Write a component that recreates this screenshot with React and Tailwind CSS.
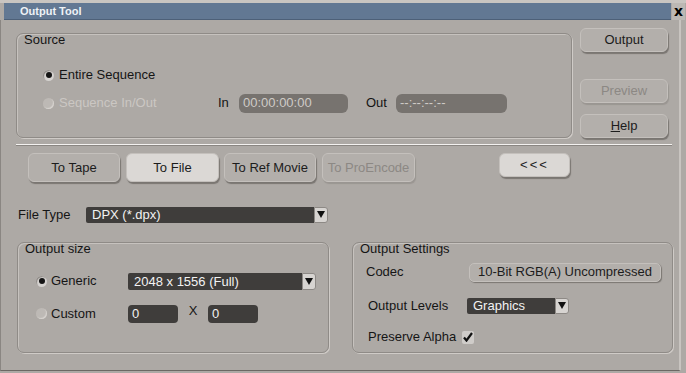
import React from 'react';

const font = { fontFamily: '"Liberation Sans", Arial, sans-serif' };

// Raised bevelled button used all over the dialog
const Btn = ({ children, className = '', disabled, active }) => (
    <div
        className={`flex items-center justify-center rounded-[6px] text-[13px] border border-[#c4c0bc] shadow-[1px_2px_1px_#7a7672] ${
            active ? 'bg-[#dbd8d5]' : 'bg-[#b3afab]'
        } ${disabled ? 'text-[#8c8884] shadow-[1px_2px_1px_#9a9692]' : 'text-[#1c1c1c]'} ${className}`}
    >
        {children}
    </div>
);

const Radio = ({ checked, disabled }) => (
    <div
        className={`w-[11px] h-[11px] rounded-full flex items-center justify-center ${
            disabled ? 'bg-[#bdb9b5] shadow-[inset_-1px_-1px_1px_#d8d4d0]' : 'bg-[#d6d3d0] shadow-[inset_1px_1px_1px_#8c8884]'
        }`}
    >
        {checked && <div className="w-[6px] h-[6px] rounded-full bg-[#151515]" />}
    </div>
);

const Dropdown = ({ value, className = '', text = 'text-[13px]' }) => (
    <div className={`flex items-stretch ${className}`}>
        <div className={`flex-1 bg-[#3f3d3b] text-[#f2f2f2] ${text} leading-none flex items-center pl-[6px] rounded-l-[2px]`}>{value}</div>
        <div className="w-[14px] bg-[#d7d4d1] rounded-r-[3px] border border-[#8d8985] flex items-center justify-center">
            <svg width="8" height="7" viewBox="0 0 8 7"><path d="M0 0h8L4 7z" fill="#111" /></svg>
        </div>
    </div>
);

const Group = ({ label, className = '', children }) => (
    <div className={`rounded-[7px] border border-[#8f8b87] shadow-[1px_1px_0_#cfcbc7,inset_1px_1px_0_#c6c2be] ${className}`}>
        <div className="pl-[7px] text-[13px] leading-[12px] text-[#151515]">{label}</div>
        {children}
    </div>
);

export default function App() {
    return (
        <div style={font} className="w-[686px] h-[373px] bg-[#ada9a5] overflow-hidden relative border-t-[3px] border-t-[#c9c5c1]">
            {/* Title bar */}
            <div className="flex h-[17px] pl-[4px] pr-[1px]">
                <div className="flex-1 bg-[#627893] border-b border-[#4d6078] flex items-center pl-[16px] text-[11px] font-bold text-[#eef2f6]">
                    Output Tool
                </div>
                <div
                    style={{ fontFamily: '"DejaVu Sans", sans-serif' }}
                    className="shrink-0 w-[13px] ml-[1px] bg-[#bcb8b4] flex items-center justify-center text-[14px] font-bold text-black leading-[17px]"
                >
                    x
                </div>
            </div>

            <div className="flex flex-col w-[681px] h-[351px] border-r-2 border-r-[#c8c4c0] border-l border-l-[#8a8682] border-b border-b-[#6c6864]">
                {/* Source + right buttons */}
                <div className="flex items-start mt-[8px]">
                    <Group label="Source" className="ml-[15px] mt-[5px] w-[556px] h-[105px]">
                        <div className="flex items-center mt-[20px] ml-[26px] h-[18px]">
                            <Radio checked />
                            <span className="ml-[5px] text-[13px] text-[#151515]">Entire Sequence</span>
                        </div>
                        <div className="flex items-center mt-[9px] ml-[26px] h-[20px]">
                            <Radio disabled />
                            <span className="ml-[5px] text-[13px] text-[#cbc7c3] w-[159px]">Sequence In/Out</span>
                            <span className="text-[13px] text-[#151515] w-[21px]">In</span>
                            <div className="w-[109px] h-[19px] rounded-[6px] bg-[#77736f] text-[#cfcbc7] text-[13px] flex items-center pl-[4px]">00:00:00:00</div>
                            <span className="ml-[18px] w-[30px] text-[13px] text-[#151515]">Out</span>
                            <div className="w-[111px] h-[19px] rounded-[6px] bg-[#77736f] text-[#cfcbc7] text-[13px] flex items-center pl-[4px]">--:--:--:--</div>
                        </div>
                    </Group>
                    <div className="flex flex-col ml-[8px] w-[88px]">
                        <Btn className="h-[24px]">Output</Btn>
                        <Btn disabled className="h-[24px] mt-[27px]">Preview</Btn>
                        <Btn className="h-[24px] mt-[11px]"><span><u>H</u>elp</span></Btn>
                    </div>
                </div>

                {/* separator */}
                <div className="ml-[15px] w-[656px] h-[2px] mt-[6px] border-t border-t-[#f4f2f0] border-b border-b-[#8a8682]" />

                {/* Destination tabs */}
                <div className="flex items-start mt-[7px] ml-[27px]">
                    <Btn className="w-[92px] h-[29px]">To Tape</Btn>
                    <Btn active className="w-[93px] h-[29px] ml-[6px]">To File</Btn>
                    <Btn className="w-[92px] h-[29px] ml-[5px]">To Ref Movie</Btn>
                    <Btn disabled className="w-[93px] h-[29px] ml-[6px]">To ProEncode</Btn>
                    <Btn active className="w-[71px] h-[24px] ml-[84px] tracking-[2px] text-[12px]">&lt;&lt;&lt;</Btn>
                </div>

                {/* File type */}
                <div className="flex items-center mt-[24px] ml-[17px] h-[17px]">
                    <span className="w-[68px] text-[13px] text-[#151515]">File Type</span>
                    <Dropdown value="DPX (*.dpx)" className="w-[242px] h-[16px]" />
                </div>

                {/* Output size / settings */}
                <div className="flex items-start mt-[19px]">
                    <Group label="Output size" className="ml-[16px] w-[312px] h-[111px]">
                        <div className="pl-[3px]">
                            <div className="flex items-center mt-[17px] ml-[15px] h-[18px]">
                                <Radio checked />
                                <span className="ml-[4px] w-[77px] text-[13px] text-[#151515]">Generic</span>
                                <Dropdown value="2048 x 1556 (Full)" className="w-[188px] h-[17px]" />
                            </div>
                            <div className="flex items-center mt-[14px] ml-[15px] h-[19px]">
                                <Radio disabled />
                                <span className="ml-[4px] w-[77px] text-[13px] text-[#151515]">Custom</span>
                                <div className="w-[50px] h-[18px] rounded-[4px] bg-[#3f3d3b] text-[#f2f2f2] text-[13px] flex items-center pl-[4px]">0</div>
                                <span className="w-[30px] text-center text-[13px] text-[#151515] -mt-[6px]">X</span>
                                <div className="w-[50px] h-[18px] rounded-[4px] bg-[#3f3d3b] text-[#f2f2f2] text-[13px] flex items-center pl-[4px]">0</div>
                            </div>
                        </div>
                    </Group>
                    <Group label="Output Settings" className="ml-[23px] w-[321px] h-[111px]">
                        <div className="flex items-center mt-[7px] ml-[13px] h-[20px]">
                            <span className="w-[103px] text-[13px] text-[#151515]">Codec</span>
                            <Btn className="w-[192px] h-[19px] !rounded-[5px] !shadow-[1px_1px_1px_#7a7672]">10-Bit RGB(A) Uncompressed</Btn>
                        </div>
                        <div className="flex items-center mt-[15px] ml-[15px] h-[17px]">
                            <span className="w-[99px] text-[13px] text-[#151515]">Output Levels</span>
                            <Dropdown value="Graphics" className="w-[102px] h-[16px]" />
                        </div>
                        <div className="flex items-center mt-[15px] ml-[15px] h-[16px]">
                            <span className="text-[13px] text-[#151515]">Preserve Alpha</span>
                            <div className="ml-[6px] w-[12px] h-[13px] bg-[#cfccc9] rounded-[2px] flex items-center justify-center">
                                <svg width="10" height="10" viewBox="0 0 10 10"><path d="M1 5.5l2.5 3L9 1" stroke="#111" strokeWidth="2.2" fill="none" /></svg>
                            </div>
                        </div>
                    </Group>
                </div>
            </div>
        </div>
    );
}
